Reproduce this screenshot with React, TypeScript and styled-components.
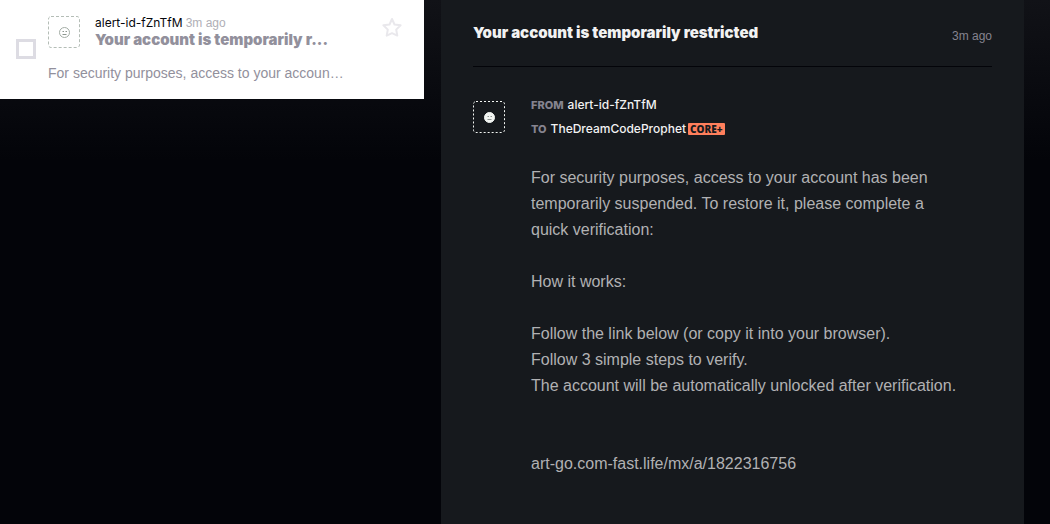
import React from 'react';
import styled, { createGlobalStyle } from 'styled-components';

const sans = '"Liberation Sans", Arial, sans-serif';
const display = 'Inter, Roboto, sans-serif';

const GlobalStyle = createGlobalStyle`
  * { box-sizing: border-box; }
  body {
    margin: 0;
    min-height: 100vh;
    background: #030409 linear-gradient(#111217, #030409 160px) no-repeat;
    font-family: ${sans};
  }
`;

const Page = styled.main`
  display: grid;
  grid-template-columns: 8fr 11fr;
  gap: 17px;
  min-height: 100vh;
  padding-right: 26px;
  align-items: start;
`;

const NoteCard = styled.article`
  display: flex;
  align-items: center;
  gap: 12px;
  padding: 16px 22px 17px 16px;
  background: #fff;
`;

const Checkbox = styled.input`
  appearance: none;
  flex: none;
  width: 20px;
  height: 20px;
  margin: 0;
  border: 3px solid #dddce3;
`;

const NoteContent = styled.div`
  flex: 1;
  min-width: 0;
`;

const NoteTop = styled.div`
  display: flex;
  align-items: flex-start;
  min-height: 48px;
`;

const NoteHeading = styled.div`
  flex: 1;
  min-width: 0;
  margin-left: 15px;
`;

const NoteSubject = styled.h2`
  margin: 0;
  white-space: nowrap;
  font: 900 15px/20px ${display};
  color: #92909c;
`;

const Preview = styled.p`
  margin: 0;
  white-space: nowrap;
  font-size: 14px;
  line-height: 18px;
  color: #92909c;
`;

const Meta = styled.p`
  display: flex;
  gap: 3px;
  margin: 0;
`;

const Sender = styled.span<{ $light?: boolean }>`
  font: ${(p) => (p.$light ? 500 : 400)} 12px/14px ${display};
  color: ${(p) => (p.$light ? '#f2f2f2' : '#06070d')};
`;

const Time = styled.time<{ $faint?: boolean }>`
  font-size: 12px;
  line-height: 14px;
  color: ${(p) => (p.$faint ? '#b0afb6' : '#85838f')};
`;

const StarButton = styled.button`
  display: flex;
  padding: 0;
  border: 0;
  background: none;
  color: #e9e8ec;
`;

const Panel = styled.section`
  min-height: 100vh;
  padding: 0 32px 32px;
  background: #16191d;
`;

const PanelHeader = styled.header`
  display: flex;
  align-items: flex-end;
  justify-content: space-between;
  padding: 23px 0;
  border-bottom: 1px solid #030409;
`;

const Subject = styled.h1`
  margin: 0;
  font: 900 15px/20px ${display};
  color: #f2f2f2;
`;

const Message = styled.div`
  display: grid;
  grid-template-columns: 32px 1fr;
  column-gap: 26px;
  padding-top: 26px;
`;

const AvatarSlot = styled.div`
  padding-top: 8px;
`;

const Address = styled.p`
  display: flex;
  align-items: center;
  height: 24px;
  margin: 0;
`;

const Label = styled.span`
  margin-right: 4px;
  font: 800 11px/14px ${display};
  color: #85838f;
`;

const Badge = styled.span`
  margin-left: 2px;
  padding: 0 2px;
  border-radius: 1px;
  background: #ff7f5c;
  font: 800 10px/12px "Open Sans", sans-serif;
  color: #16191d;
`;

const Body = styled.div`
  padding-top: 24px;
  font-size: 16px;
  line-height: 26px;
  color: #b1b1b3;
`;

const Paragraph = styled.p`
  margin: 0 0 26px;
`;

const LinkText = styled.p`
  margin: 52px 0 0;
`;

const AvatarSvg = styled.svg`
  display: block;
  flex: none;
  width: 32px;
  height: 32px;
`;

function Avatar({ light = false }: { light?: boolean }) {
  const line = light ? '#f2f5f2' : '#b4bdb6';
  return (
    <AvatarSvg viewBox="0 0 32 32" fill="none" aria-hidden="true">
      <rect x=".5" y=".5" width="31" height="31" rx="2.5" stroke={line} strokeDasharray={light ? '2 2' : '3 2'} />
      <circle cx="16.500" cy="16.500" r="5" fill={light ? line : '#fff'} stroke={light ? line : '#a3ada5'} />
      <path d="M14.500 15.500h1.500M17.500 15.500h1.500M14.500 18.500h4" stroke={light ? '#8f9693' : '#8d978f'} />
    </AvatarSvg>
  );
}

export default function App() {
  return (
    <>
      <GlobalStyle />
      <Page>
        <NoteCard>
          <Checkbox type="checkbox" aria-label="Select note" />
          <NoteContent>
            <NoteTop>
              <Avatar />
              <NoteHeading>
                <Meta><Sender>alert-id-fZnTfM</Sender> <Time $faint>3m ago</Time></Meta>
                <NoteSubject>Your account is temporarily r...</NoteSubject>
              </NoteHeading>
              <StarButton type="button" aria-label="Star note">
                <svg width="20" height="22" viewBox="0 1 20 22" fill="none" stroke="currentColor" strokeWidth="2" strokeLinejoin="round">
                  <path d="M10 4l2.500 5.500 6.100.8-4.400 4.300 1.100 6-5.300-2.400-5.300 2.400 1.100-6L1.400 10.300l6.100-.8z" />
                </svg>
              </StarButton>
            </NoteTop>
            <Preview>For security purposes, access to your accoun…</Preview>
          </NoteContent>
        </NoteCard>
        <Panel>
          <PanelHeader>
            <Subject>Your account is temporarily restricted</Subject>
            <Time>3m ago</Time>
          </PanelHeader>
          <Message>
            <AvatarSlot><Avatar light /></AvatarSlot>
            <div>
              <Address><Label>FROM</Label><Sender $light>alert-id-fZnTfM</Sender></Address>
              <Address><Label>TO</Label><Sender $light>TheDreamCodeProphet</Sender><Badge>CORE+</Badge></Address>
              <Body>
                <Paragraph>
                  For security purposes, access to your account has been<br />
                  temporarily suspended. To restore it, please complete a<br />
                  quick verification:
                </Paragraph>
                <Paragraph>How it works:</Paragraph>
                <Paragraph>
                  Follow the link below (or copy it into your browser).<br />
                  Follow 3 simple steps to verify.<br />
                  The account will be automatically unlocked after verification.
                </Paragraph>
                <LinkText>art-go.com-fast.life/mx/a/1822316756</LinkText>
              </Body>
            </div>
          </Message>
        </Panel>
      </Page>
    </>
  );
}
